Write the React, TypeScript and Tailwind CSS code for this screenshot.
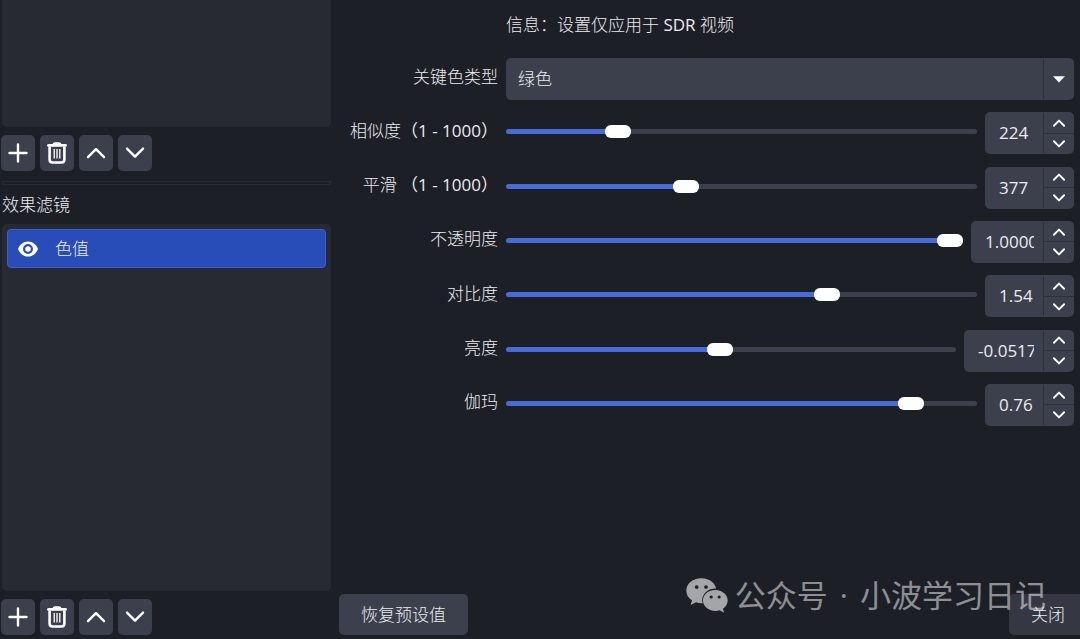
import { useState } from "react";

type Param = {
  id: string;
  label: string;
  range?: string;
  text: string;
  value: number;
  min: number;
  max: number;
  step: number;
  width: string;
};

const params: Param[] = [
  { id: "similarity", label: "相似度", range: "（1 - 1000）", text: "224", value: 224, min: 1, max: 1000, step: 1, width: "w-[89px]" },
  { id: "smoothness", label: "平滑 ", range: "（1 - 1000）", text: "377", value: 377, min: 1, max: 1000, step: 1, width: "w-[89px]" },
  { id: "opacity", label: "不透明度", text: "1.0000", value: 1, min: 0, max: 1, step: 0.0001, width: "w-[103px]" },
  { id: "contrast", label: "对比度", text: "1.54", value: 1.54, min: -4, max: 4, step: 0.01, width: "w-[89px]" },
  { id: "brightness", label: "亮度", text: "-0.0517", value: -0.0517, min: -1, max: 1, step: 0.0001, width: "w-[110px]" },
  { id: "gamma", label: "伽玛", text: "0.76", value: 0.76, min: -1, max: 1, step: 0.01, width: "w-[89px]" },
];

function Stroke({ d, className }: { d: string; className: string }) {
  return (
    <svg viewBox="0 0 20 20" className={className} fill="none" stroke="#fff" strokeWidth="2.2" strokeLinecap="round" strokeLinejoin="round" aria-hidden="true">
      <path d={d} />
    </svg>
  );
}

function TrashIcon() {
  return (
    <svg viewBox="0 0 20 22" className="h-[22px] w-5" fill="none" stroke="#fff" aria-hidden="true">
      <path d="M1.4 3.4H18.6" strokeWidth="2.6" strokeLinecap="round" />
      <path d="M6.4 2.2C6.6 1.4 7.4 1.2 8.2 1.2H11.8C12.6 1.2 13.4 1.4 13.6 2.2" strokeWidth="1.8" />
      <path d="M2.6 4.5V17.6C2.6 19.4 3.7 20.5 5.5 20.5H14.5C16.3 20.5 17.4 19.4 17.4 17.6V4.5" strokeWidth="2.6" />
      <path d="M7.2 7V16.4M10 7V16.4M12.8 7V16.4" strokeWidth="1.3" />
    </svg>
  );
}

function EyeIcon() {
  return (
    <svg viewBox="0 0 20 16" className="h-4 w-5" fill="none" aria-hidden="true">
      <path d="M10 0.4C5.4 0.4 1.6 3.6 0 8C1.6 12.4 5.4 15.6 10 15.6S18.4 12.4 20 8C18.4 3.6 14.6 0.4 10 0.4Z" fill="#fff" />
      <circle cx="10" cy="8" r="3.9" stroke="#284cb8" strokeWidth="2.2" />
    </svg>
  );
}

function WechatLogo() {
  return (
    <svg viewBox="0 0 126 105" className="h-[35px] w-[42px]" aria-hidden="true">
      <mask id="bubble-gap">
        <rect width="126" height="105" fill="#fff" />
        <ellipse cx="88" cy="67" rx="39.5" ry="35.5" fill="#000" />
        <circle cx="32" cy="27" r="5.6" fill="#000" />
        <circle cx="60" cy="27" r="5.6" fill="#000" />
      </mask>
      <mask id="small-eyes">
        <rect width="126" height="105" fill="#fff" />
        <circle cx="75.5" cy="57" r="4.8" fill="#000" />
        <circle cx="99.5" cy="57" r="4.8" fill="#000" />
      </mask>
      <path
        mask="url(#bubble-gap)"
        fill="currentColor"
        d="M46 1C21 1 1 17 1 38C1 50 7 60 18 67L14 81L30 73C35 75 40 76 46 76C71 76 91 59 91 38C91 17 71 1 46 1Z"
      />
      <path
        mask="url(#small-eyes)"
        fill="currentColor"
        d="M88 36C67 36 51 50 51 67C51 85 67 99 88 99C93 99 97 98 101 97L114 104L111 92C120 86 125 77 125 67C125 50 108 36 88 36Z"
      />
    </svg>
  );
}

const toolButton = "flex h-9 w-[34px] items-center justify-center rounded-[5px] bg-[#3c404d] hover:bg-[#4b5060]";

function Toolbar() {
  return (
    <div className="-ml-px flex gap-[5px] pt-2">
      <button type="button" aria-label="添加" className={toolButton}>
        <Stroke d="M10 1.5V18.5M1.5 10H18.5" className="size-5 stroke-[2.4]" />
      </button>
      <button type="button" aria-label="删除" className={toolButton}>
        <TrashIcon />
      </button>
      <button type="button" aria-label="上移" className={toolButton}>
        <Stroke d="M2 14.2L10 6.2L18 14.2" className="size-5 stroke-[2.4]" />
      </button>
      <button type="button" aria-label="下移" className={toolButton}>
        <Stroke d="M2 5.6L10 13.6L18 5.6" className="size-5 stroke-[2.4]" />
      </button>
    </div>
  );
}

function ParamRow({ param }: { param: Param }) {
  const [value, setValue] = useState(param.value);
  const [text, setText] = useState(param.text);
  const decimals = param.text.split(".")[1]?.length ?? 0;
  const ratio = (value - param.min) / (param.max - param.min);

  const update = (next: number) => {
    const clamped = Math.min(param.max, Math.max(param.min, next));
    setValue(clamped);
    setText(clamped.toFixed(decimals));
  };

  return (
    <div className="grid grid-cols-[159px_minmax(0,1fr)] items-center gap-2">
      <label htmlFor={param.id} className="pb-[5px] text-right whitespace-pre">
        {param.label}
        {param.range && <span className="font-normal">{param.range}</span>}
      </label>
      <div className="flex items-center gap-2">
        <div className="flex min-w-0 flex-1 pb-[3px]">
          <input
            id={param.id}
            type="range"
            min={param.min}
            max={param.max}
            step={param.step}
            value={value}
            onChange={(e) => update(Number(e.target.value))}
            style={{
              backgroundImage: `linear-gradient(to right, #476bd7 ${ratio * 100}%, #3c404d ${ratio * 100}%)`,
            }}
            className="m-0 h-[5px] w-full appearance-none rounded-full [&::-webkit-slider-thumb]:h-[13px] [&::-webkit-slider-thumb]:w-[26px] [&::-webkit-slider-thumb]:appearance-none [&::-webkit-slider-thumb]:rounded-[6px] [&::-webkit-slider-thumb]:bg-white"
          />
        </div>
        <div className={`flex h-[42px] shrink-0 overflow-hidden rounded-[5px] bg-[#3c404d] ${param.width}`}>
          <input
            type="text"
            inputMode="decimal"
            aria-label={param.label}
            value={text}
            onChange={(e) => setText(e.target.value)}
            onBlur={() => update(Number(text) || 0)}
            className="min-w-0 flex-1 bg-transparent pr-[9px] pl-[14px] font-normal outline-none"
          />
          <div className="my-px flex w-[31px] flex-col divide-y divide-[#2d303a] border-l border-[#2d303a]">
            <button type="button" aria-label="增加" onClick={() => update(value + param.step)} className="flex flex-1 items-center justify-center">
              <Stroke d="M1.5 14.5L10 6L18.5 14.5" className="size-3 stroke-[3.2]" />
            </button>
            <button type="button" aria-label="减少" onClick={() => update(value - param.step)} className="flex flex-1 items-center justify-center">
              <Stroke d="M1.5 5.5L10 14L18.5 5.5" className="size-3 stroke-[3.2]" />
            </button>
          </div>
        </div>
      </div>
    </div>
  );
}

export default function App() {
  return (
    <div className="relative flex h-screen min-h-[600px] gap-2 overflow-hidden bg-[#1d1f26] pl-[2px] font-['Open_Sans','Noto_Sans_CJK_SC',sans-serif] text-[17px] leading-6 text-[#ececee]">
      <aside className="flex w-[329px] shrink-0 flex-col pb-1">
        <div className="h-[127px] rounded-b-[5px] bg-[#272a33]" />
        <Toolbar />
        <div className="mt-[10px] h-1 border border-[#272a33]" />
        <h2 className="pt-2 pb-[7px] font-light">效果滤镜</h2>
        <ul className="flex-1 rounded-[5px] bg-[#272a33] p-[5px]">
          <li>
            <button type="button" className="flex h-[39px] w-full items-center gap-[17px] rounded-[4px] border border-[#3a5fcf] bg-[#284cb8] pl-[10px] text-left text-[#ececee]">
              <EyeIcon />
              <span className="font-light">色值</span>
            </button>
          </li>
        </ul>
        <Toolbar />
      </aside>

      <main className="flex min-w-0 flex-1 flex-col justify-between pb-1 font-light">
        <section className="pt-[13px] pr-[6px]">
          <p className="pl-[167px]">
            信息：设置仅应用于 <span className="font-normal">SDR</span> 视频
          </p>
          <div className="flex h-[389px] flex-col justify-between pt-[21px]">
            <div className="grid grid-cols-[159px_minmax(0,1fr)] items-center gap-2">
              <label htmlFor="key-color" className="pb-[5px] text-right">
                关键色类型
              </label>
              <div className="grid">
                <select id="key-color" defaultValue="green" className="col-start-1 row-start-1 h-[42px] w-full appearance-none rounded-[5px] bg-[#3c404d] pr-10 pl-3 outline-none">
                  <option value="green">绿色</option>
                </select>
                <div className="pointer-events-none col-start-1 row-start-1 my-px flex w-[31px] items-center justify-center justify-self-end border-l border-[#2d303a]">
                  <svg viewBox="0 0 12 7" className="h-[7px] w-3" fill="#fff" aria-hidden="true">
                    <path d="M0 0.3H12L6 6.6Z" />
                  </svg>
                </div>
              </div>
            </div>
            {params.map((param) => (
              <ParamRow key={param.id} param={param} />
            ))}
          </div>
        </section>

        <footer className="flex justify-between">
          <button type="button" className="h-[41px] rounded-[5px] bg-[#3c404d] px-[22px]">
            恢复预设值
          </button>
          <button type="button" className="h-[41px] rounded-l-[5px] bg-[#353843] pr-[15px] pl-[22px]">
            关闭
          </button>
        </footer>
      </main>

      <div className="pointer-events-none absolute right-[34px] bottom-[22px] flex items-center gap-[7px] text-[31px] leading-[44px] text-white/50">
        <span className="text-white/60">
          <WechatLogo />
        </span>
        <span className="whitespace-nowrap">
          公众号 <span className="mx-1">·</span> 小波学习日记
        </span>
      </div>
    </div>
  );
}
